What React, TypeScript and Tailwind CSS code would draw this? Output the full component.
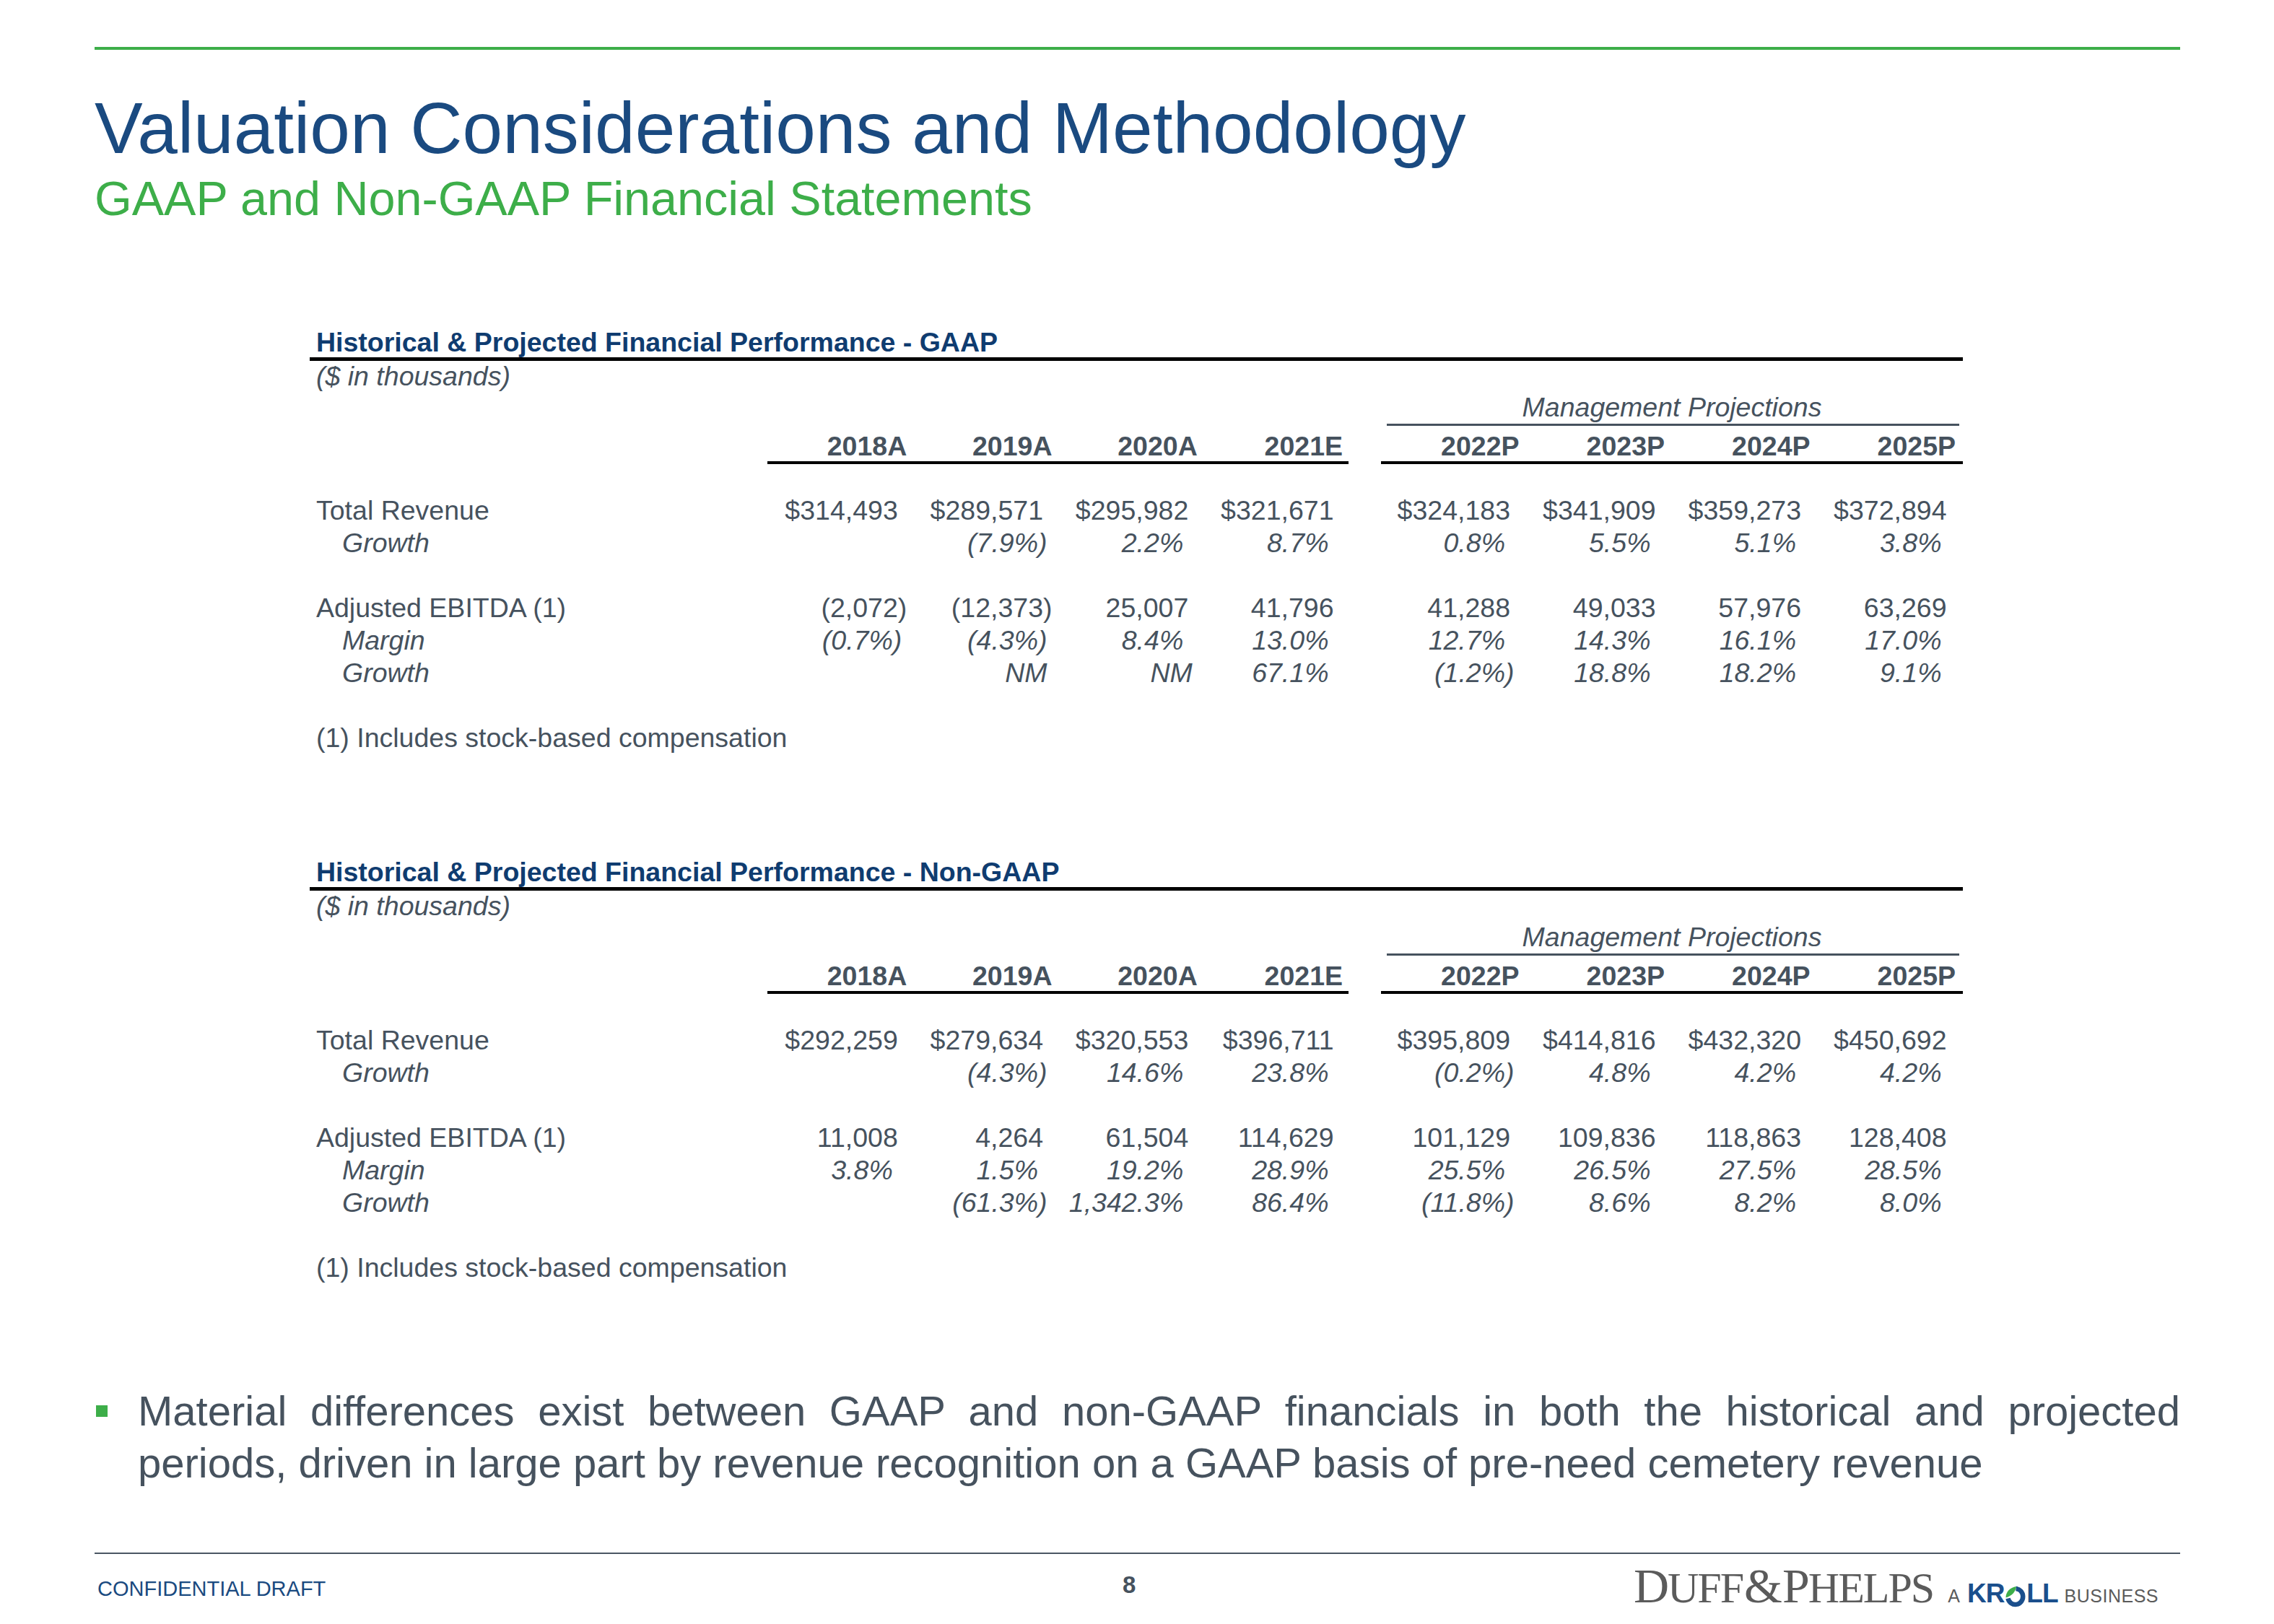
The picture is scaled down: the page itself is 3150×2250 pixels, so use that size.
type RowKind = 'num' | 'pct';

interface TableRow {
  label: string;
  kind: RowKind;
  values: string[];
}

interface FinancialTable {
  title: string;
  rows: (TableRow | null)[];
}

const YEARS_HIST = ['2018A', '2019A', '2020A', '2021E'];
const YEARS_PROJ = ['2022P', '2023P', '2024P', '2025P'];

const TABLES: FinancialTable[] = [
  {
    title: 'Historical & Projected Financial Performance - GAAP',
    rows: [
      {
        label: 'Total Revenue',
        kind: 'num',
        values: ['$314,493', '$289,571', '$295,982', '$321,671', '$324,183', '$341,909', '$359,273', '$372,894']
      },
      {
        label: 'Growth',
        kind: 'pct',
        values: ['', '(7.9%)', '2.2%', '8.7%', '0.8%', '5.5%', '5.1%', '3.8%']
      },
      null,
      {
        label: 'Adjusted EBITDA (1)',
        kind: 'num',
        values: ['(2,072)', '(12,373)', '25,007', '41,796', '41,288', '49,033', '57,976', '63,269']
      },
      {
        label: 'Margin',
        kind: 'pct',
        values: ['(0.7%)', '(4.3%)', '8.4%', '13.0%', '12.7%', '14.3%', '16.1%', '17.0%']
      },
      {
        label: 'Growth',
        kind: 'pct',
        values: ['', 'NM', 'NM', '67.1%', '(1.2%)', '18.8%', '18.2%', '9.1%']
      }
    ]
  },
  {
    title: 'Historical & Projected Financial Performance - Non-GAAP',
    rows: [
      {
        label: 'Total Revenue',
        kind: 'num',
        values: ['$292,259', '$279,634', '$320,553', '$396,711', '$395,809', '$414,816', '$432,320', '$450,692']
      },
      {
        label: 'Growth',
        kind: 'pct',
        values: ['', '(4.3%)', '14.6%', '23.8%', '(0.2%)', '4.8%', '4.2%', '4.2%']
      },
      null,
      {
        label: 'Adjusted EBITDA (1)',
        kind: 'num',
        values: ['11,008', '4,264', '61,504', '114,629', '101,129', '109,836', '118,863', '128,408']
      },
      {
        label: 'Margin',
        kind: 'pct',
        values: ['3.8%', '1.5%', '19.2%', '28.9%', '25.5%', '26.5%', '27.5%', '28.5%']
      },
      {
        label: 'Growth',
        kind: 'pct',
        values: ['', '(61.3%)', '1,342.3%', '86.4%', '(11.8%)', '8.6%', '8.2%', '8.0%']
      }
    ]
  }
];

function ValueCell({ value, kind, proj }: { value: string; kind: RowKind; proj: boolean }) {
  // accounting format: positives leave room for the closing paren
  const closesParen = value.endsWith(')') || value === 'NM';
  const padding =
    kind === 'pct'
      ? proj
        ? 'pr-[17px] italic'
        : 'pr-[15px] italic'
      : proj
        ? 'pr-[10px]'
        : 'pr-[8px]';

  return (
    <div className={`w-1/4 text-right whitespace-nowrap ${padding}`}>
      {value}
      {value && !closesParen && <span className="invisible">)</span>}
    </div>
  );
}

function DataRow({ row }: { row: TableRow }) {
  const italic = row.kind === 'pct';
  return (
    <div className="flex h-[45px] leading-[45px]">
      <div className={`w-[634px] ${italic ? 'pl-[45px] italic' : 'pl-[9px]'}`}>{row.label}</div>
      <div className="flex w-[805px]">
        {row.values.slice(0, 4).map((v, i) => (
          <ValueCell key={i} value={v} kind={row.kind} proj={false} />
        ))}
      </div>
      <div className="w-[45px]" />
      <div className="flex w-[806px]">
        {row.values.slice(4).map((v, i) => (
          <ValueCell key={i} value={v} kind={row.kind} proj={true} />
        ))}
      </div>
    </div>
  );
}

function Table({ table, className }: { table: FinancialTable; className?: string }) {
  return (
    <div className={`w-[2290px] text-[37.5px] text-[#46525e] ${className ?? ''}`}>
      <div className="h-[42px] leading-[42px] pl-[9px] text-[37.5px] font-bold text-[#0f3c70] border-b-[5px] border-black box-content">
        {table.title}
      </div>
      <div className="h-[42px] leading-[42px] pl-[9px] italic">($ in thousands)</div>

      <div className="flex">
        <div className="w-[1484px]" />
        <div className="w-[806px]">
          <div className="h-[45px] leading-[45px] text-center italic">Management Projections</div>
          <div className="ml-[8px] mr-[5px] h-[3px] bg-[#46525e]" />
        </div>
      </div>

      <div className="flex pt-[6px] font-bold">
        <div className="w-[634px]" />
        <div className="flex w-[805px] border-b-4 border-black">
          {YEARS_HIST.map((y) => (
            <div key={y} className="w-1/4 h-[43px] leading-[45px] text-right pr-[8px]">
              {y}
            </div>
          ))}
        </div>
        <div className="w-[45px]" />
        <div className="flex w-[806px] border-b-4 border-black">
          {YEARS_PROJ.map((y) => (
            <div key={y} className="w-1/4 h-[43px] leading-[45px] text-right pr-[10px]">
              {y}
            </div>
          ))}
        </div>
      </div>

      <div className="h-[42px]" />

      {table.rows.map((row, i) =>
        row ? <DataRow key={i} row={row} /> : <div key={i} className="h-[45px]" />
      )}
      <div className="h-[45px]" />
      <div className="h-[45px] leading-[45px] pl-[9px]">(1) Includes stock-based compensation</div>
    </div>
  );
}

function KrollO() {
  return (
    <svg width="29" height="30" viewBox="0 0 29 30" className="mx-[1px] mb-[-1px]">
      <path d="M15.5 4 A10.5 11 0 1 1 4.5 17.5" fill="none" stroke="#1b4f8c" strokeWidth="6.5" />
      <path d="M1.5 16.5 C1.5 8.5 7 2.5 16 1 C15 8.5 10 14 1.5 16.5 Z" fill="#3dae49" />
    </svg>
  );
}

function Logo() {
  return (
    <div className="flex items-baseline text-[#5b5b5b]">
      <div className="flex items-baseline font-['Liberation_Serif',serif] tracking-[-2px] leading-[68px]">
        <span className="text-[68px]">D</span>
        <span className="text-[60px]">UFF</span>
        <span className="text-[68px] mx-[2px]">&amp;</span>
        <span className="text-[68px]">P</span>
        <span className="text-[60px]">HELPS</span>
      </div>
      <span className="ml-[20px] text-[25px]">A</span>
      <span className="ml-[10px] flex items-end text-[37px] font-bold text-[#1b4f8c] leading-none tracking-[-1px]">
        KR
        <KrollO />
        LL
      </span>
      <span className="ml-[9px] text-[25px] tracking-[0.5px]">BUSINESS</span>
    </div>
  );
}

export default function App() {
  return (
    <div className="w-[3150px] h-[2250px] bg-white font-['Liberation_Sans',Arial,sans-serif] pl-[131px] pr-[130px] pt-[65px] overflow-hidden">
      <div className="h-[4px] bg-[#3dae49]" />

      <h1 className="mt-[58px] text-[100px] leading-[100px] text-[#1a4a80]">
        Valuation Considerations and Methodology
      </h1>
      <h2 className="mt-[15px] text-[66.5px] leading-[66px] text-[#3dae49]">
        GAAP and Non-GAAP Financial Statements
      </h2>

      <div className="ml-[298px] mt-[145px]">
        <Table table={TABLES[0]} />
        <Table table={TABLES[1]} className="mt-[142px]" />
      </div>

      <div className="mt-[140px] flex">
        <div className="ml-[2px] mt-[28px] w-[16px] h-[16px] shrink-0 bg-[#3dae49]" />
        <p className="ml-[42px] text-[58px] leading-[72px] text-[#46525e] text-justify">
          Material differences exist between GAAP and non-GAAP financials in both the historical and projected
          periods, driven in large part by revenue recognition on a GAAP basis of pre-need cemetery revenue
        </p>
      </div>

      <div className="mt-[88px] h-[2px] bg-[#4a5663]" />

      <div className="flex items-start">
        <div className="w-[1424px] mt-[34px] pl-[4px] text-[29px] leading-[29px] text-[#1a4a80]">
          CONFIDENTIAL DRAFT
        </div>
        <div className="mt-[26px] text-[33px] leading-[33px] font-bold text-[#46525e]">8</div>
        <div className="ml-auto mr-[30px] mt-[10px]">
          <Logo />
        </div>
      </div>
    </div>
  );
}
